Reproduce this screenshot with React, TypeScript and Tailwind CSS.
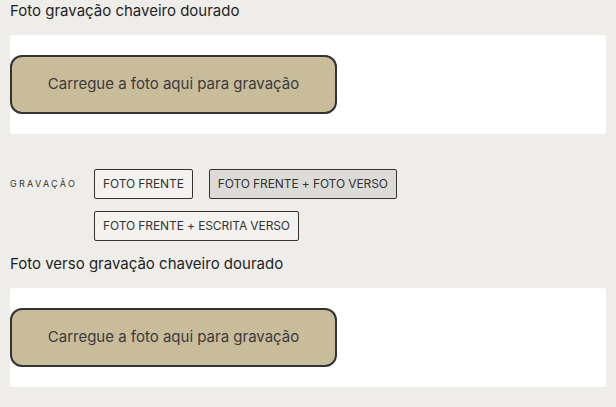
import React from 'react';

const font = { fontFamily: 'Inter, "Noto Sans", sans-serif' };

function UploadPanel() {
  return (
    <div className="mt-[14px] h-[99px] rounded-[3px] bg-white py-5">
      <button className="flex h-[59px] w-[327px] items-center justify-center rounded-[12px] border-2 border-[#333333] bg-[#c9bc9b] text-[15px] text-[#3b3b3b]">
        Carregue a foto aqui para gravação
      </button>
    </div>
  );
}

const options = [
  { label: 'FOTO FRENTE', selected: false },
  { label: 'FOTO FRENTE + FOTO VERSO', selected: true },
  { label: 'FOTO FRENTE + ESCRITA VERSO', selected: false },
];

export default function App() {
  return (
    <div className="h-[407px] w-[616px] bg-[#eeede9] pl-[10px] pr-[10px]" style={font}>
      <h2 className="pt-[1px] text-[15px] leading-[20px] text-[#1f1f1f]">
        Foto gravação chaveiro dourado
      </h2>
      <UploadPanel />

      <div className="mt-[35px] flex">
        <div className="flex h-[30px] w-[84px] shrink-0 items-center text-[9px] tracking-[2.3px] text-[#333333]">
          GRAVAÇÃO
        </div>
        <div className="flex w-[330px] flex-wrap gap-x-4 gap-y-3">
          {options.map((o) => (
            <button
              key={o.label}
              className={`h-[30px] rounded-[2px] border border-[#333333] px-[8px] text-[12px] tracking-[-0.1px] text-[#333333] ${
                o.selected ? 'bg-[#dcdbd7]' : 'bg-[#f3f2ee]'
              }`}
            >
              {o.label}
            </button>
          ))}
        </div>
      </div>

      <h2 className="mt-[13px] text-[15px] leading-[20px] text-[#1f1f1f]">
        Foto verso gravação chaveiro dourado
      </h2>
      <UploadPanel />
    </div>
  );
}
